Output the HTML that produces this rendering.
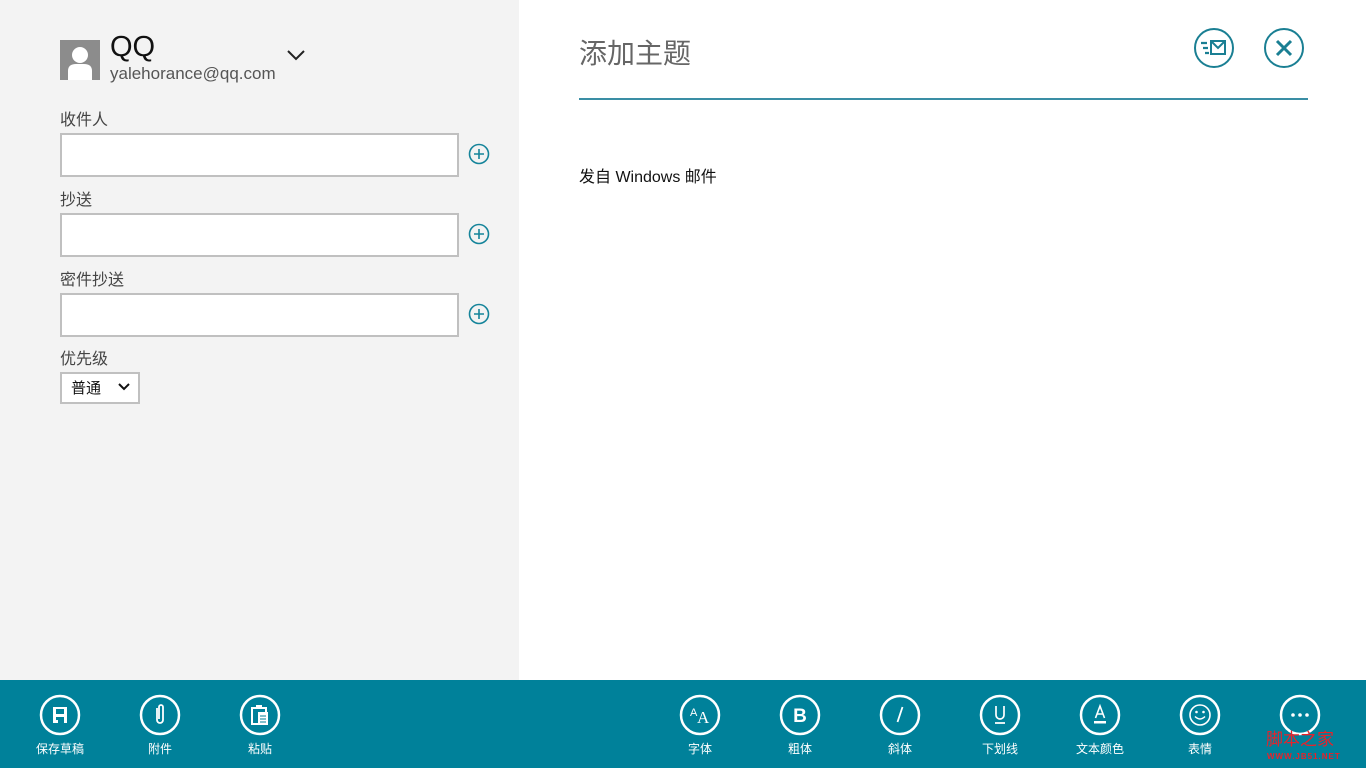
<!DOCTYPE html>
<html><head><meta charset="utf-8"><style>
*{margin:0;padding:0;box-sizing:border-box}
body{width:1366px;height:768px;position:relative;overflow:hidden;background:#fff;font-family:"Liberation Sans","Noto Sans CJK SC",sans-serif}
.a{position:absolute}
#left{left:0;top:0;width:519px;height:680px;background:#f3f3f3}
.lbl{font-size:16px;color:#444;left:60px}
.inp{left:60px;width:399px;height:44px;border:2px solid #c0c0c0;background:#fff}
.bar{left:0;top:680px;width:1366px;height:88px;background:#00819a}
.btn{position:absolute;top:694px;width:80px;text-align:center;color:#fff;font-size:12px}
.btn svg{display:block;margin:0 auto}
.btn span{display:block;margin-top:4px}
</style></head><body>
<div class="a" id="left"></div>
<svg class="a" style="left:60px;top:40px" width="40" height="40"><rect width="40" height="40" fill="#8c8c8c"/><circle cx="20" cy="15" r="8" fill="#fff"/><path d="M8 40 L8 31 Q8 24 16 24 L24 24 Q32 24 32 31 L32 40Z" fill="#fff"/></svg>
<div class="a" style="left:110px;top:31px;font-size:29px;color:#111">QQ</div>
<div class="a" style="left:110px;top:64px;font-size:17px;color:#555">yalehorance@qq.com</div>
<svg class="a" style="left:286px;top:48px" width="20" height="14"><path d="M2 3 L10 11 L18 3" stroke="#222" stroke-width="2" fill="none"/></svg>

<div class="a lbl" style="top:106px">收件人</div>
<div class="a inp" style="top:133px"></div>
<div class="a lbl" style="top:186px">抄送</div>
<div class="a inp" style="top:213px"></div>
<div class="a lbl" style="top:266px">密件抄送</div>
<div class="a inp" style="top:293px"></div>
<svg class="a" style="left:468px;top:143px" width="22" height="182">
<g stroke="#15849a" stroke-width="1.6" fill="none">
<circle cx="11" cy="11" r="9.5"/><path d="M11 6v10M6 11h10"/>
<circle cx="11" cy="91" r="9.5"/><path d="M11 86v10M6 91h10"/>
<circle cx="11" cy="171" r="9.5"/><path d="M11 166v10M6 171h10"/></g></svg>
<div class="a lbl" style="top:345px">优先级</div>
<div class="a" style="left:60px;top:372px;width:80px;height:32px;border:2px solid #c0c0c0;background:#fff;font-size:15px;color:#111;padding:3px 0 0 9px">普通</div>
<svg class="a" style="left:117px;top:382px" width="14" height="10"><path d="M2 2 L7 7 L12 2" stroke="#111" stroke-width="2" fill="none"/></svg>

<div class="a" style="left:579px;top:32px;font-size:28px;color:#666">添加主题</div>
<div class="a" style="left:579px;top:98px;width:729px;height:2px;background:#3a8ea5"></div>
<div class="a" style="left:579px;top:163px;font-size:16px;color:#111">发自 Windows 邮件</div>
<svg class="a" style="left:1192px;top:27px" width="116" height="44"><g stroke="#1a7f93" stroke-width="2" fill="none">
<circle cx="22" cy="21" r="19"/><path d="M9 16h6M11 21h5M13 26h4" stroke-width="2.2"/><rect x="19" y="14" width="14" height="13"/><path d="M19 14l7 7 7-7"/>
<circle cx="92" cy="21" r="19"/><path d="M85 14l14 14M99 14l-14 14" stroke-width="3"/></g></svg>

<div class="a bar"></div>
<div class="btn" style="left:20px"><svg width="42" height="42"><circle cx="21" cy="21" r="19" stroke="#fff" stroke-width="2.5" fill="none"/><rect x="14" y="13" width="14" height="16" fill="#fff"/><rect x="17" y="15" width="8" height="5" fill="#00819a"/><rect x="17" y="23" width="8" height="6" fill="#00819a"/><rect x="17" y="26" width="2" height="3" fill="#fff"/></svg><span>保存草稿</span></div>
<div class="btn" style="left:120px"><svg width="42" height="42"><circle cx="21" cy="21" r="19" stroke="#fff" stroke-width="2.5" fill="none"/><path d="M18 14v12a3 3 0 0 0 6 0v-13a2 2 0 0 0-4 0v12" stroke="#fff" stroke-width="1.8" fill="none"/></svg><span>附件</span></div>
<div class="btn" style="left:220px"><svg width="42" height="42"><circle cx="21" cy="21" r="19" stroke="#fff" stroke-width="2.5" fill="none"/><path d="M13 14h14v16h-14z" stroke="#fff" stroke-width="2" fill="none"/><rect x="17" y="11" width="6" height="4" fill="#fff"/><rect x="19" y="18" width="10" height="13" fill="#fff"/><path d="M21 22h6M21 25h6M21 28h6" stroke="#00819a"/></svg><span>粘贴</span></div>

<div class="btn" style="left:660px"><svg width="42" height="42"><circle cx="21" cy="21" r="19" stroke="#fff" stroke-width="2.5" fill="none"/><text x="11" y="22" font-size="11" fill="#fff" font-family="Liberation Sans">A</text><text x="18" y="29" font-size="17" fill="#fff" font-family="Liberation Serif">A</text></svg><span>字体</span></div>
<div class="btn" style="left:760px"><svg width="42" height="42"><circle cx="21" cy="21" r="19" stroke="#fff" stroke-width="2.5" fill="none"/><text x="21" y="28" font-size="19" font-weight="bold" fill="#fff" text-anchor="middle" font-family="Liberation Sans">B</text></svg><span>粗体</span></div>
<div class="btn" style="left:860px"><svg width="42" height="42"><circle cx="21" cy="21" r="19" stroke="#fff" stroke-width="2.5" fill="none"/><path d="M23.5 13l-5 15" stroke="#fff" stroke-width="1.8"/></svg><span>斜体</span></div>
<div class="btn" style="left:960px"><svg width="42" height="42"><circle cx="21" cy="21" r="19" stroke="#fff" stroke-width="2.5" fill="none"/><path d="M17 12v9a4 4 0 0 0 8 0v-9M16 29h10" stroke="#fff" stroke-width="1.7" fill="none"/></svg><span>下划线</span></div>
<div class="btn" style="left:1060px"><svg width="42" height="42"><circle cx="21" cy="21" r="19" stroke="#fff" stroke-width="2.5" fill="none"/><path d="M16.5 24L21 12l4.5 12M18 20h6" stroke="#fff" stroke-width="1.6" fill="none"/><rect x="15" y="27" width="12" height="2.5" fill="#fff"/></svg><span>文本颜色</span></div>
<div class="btn" style="left:1160px"><svg width="42" height="42"><circle cx="21" cy="21" r="19" stroke="#fff" stroke-width="2.5" fill="none"/><circle cx="21" cy="21" r="10" stroke="#fff" stroke-width="1.6" fill="none"/><circle cx="17.5" cy="18" r="1.3" fill="#fff"/><circle cx="24.5" cy="18" r="1.3" fill="#fff"/><path d="M16 22.5q5 5 10 0" stroke="#fff" stroke-width="1.5" fill="none"/></svg><span>表情</span></div>
<div class="btn" style="left:1260px"><svg width="42" height="42"><circle cx="21" cy="21" r="19" stroke="#fff" stroke-width="2.5" fill="none"/><circle cx="14" cy="21" r="1.8" fill="#fff"/><circle cx="21" cy="21" r="1.8" fill="#fff"/><circle cx="28" cy="21" r="1.8" fill="#fff"/></svg></div>
<div class="a" style="left:1266px;top:730px;font-size:17px;color:#e8222a;line-height:20px">脚本之家</div>
<div class="a" style="left:1267px;top:752px;font-size:8px;color:#e8222a;font-weight:bold;letter-spacing:1px">WWW.JB51.NET</div>
</body></html>
